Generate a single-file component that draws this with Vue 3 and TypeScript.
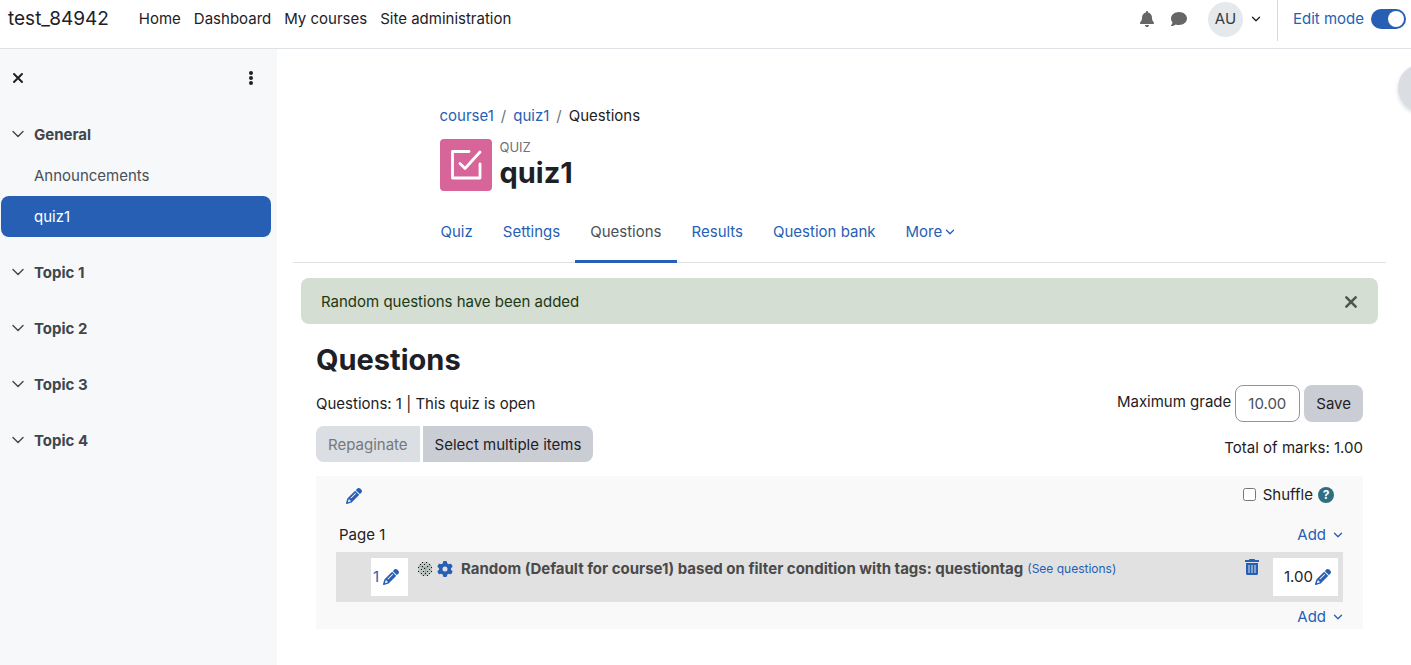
<script setup lang="ts">
import { ref } from 'vue'

const navItems: string[] = ['Home', 'Dashboard', 'My courses', 'Site administration']
const topics: string[] = ['Topic 1', 'Topic 2', 'Topic 3', 'Topic 4']
const tabs: string[] = ['Quiz', 'Settings', 'Questions', 'Results', 'Question bank']
const activeTab = ref('Questions')
const editMode = ref(true)
const shuffle = ref(false)
const maxGrade = ref('10.00')

const pencil =
  'M410.3 231l11.3-11.3-33.9-33.9-62.1-62.1L291.7 89.8l-11.3 11.3-22.6 22.6L58.6 322.9c-10.4 10.4-18 23.3-22.2 37.4L1 480.7c-2.5 8.4-.2 17.5 6.1 23.7s15.3 8.5 23.7 6.1l120.3-35.4c14.1-4.2 27-11.8 37.4-22.2L387.7 253.7 410.3 231zM160 399.4l-9.1 22.7c-4 3.1-8.5 5.4-13.3 6.9L59.4 452l23-78.1c1.4-4.9 3.8-9.4 6.9-13.3l22.7-9.1v32c0 8.8 7.2 16 16 16h32zM362.7 18.7L348.3 33.2 325.7 55.8 314.3 67.1l33.9 33.9 62.1 62.1 33.9 33.9 11.3-11.3 22.6-22.6 14.5-14.5c25-25 25-65.5 0-90.5L453.3 18.7c-25-25-65.5-25-90.5 0zm-47.4 168l-144 144c-6.2 6.2-16.4 6.2-22.6 0s-6.2-16.4 0-22.6l144-144c6.2-6.2 16.4-6.2 22.6 0s6.2 16.4 0 22.6z'
</script>

<template>
  <div class="page">
    <header class="topbar">
      <a class="brand" href="#">test_84942</a>
      <nav class="primary">
        <a v-for="item in navItems" :key="item" href="#">{{ item }}</a>
      </nav>
      <div class="tools">
        <button class="plain" type="button" aria-label="Notifications">
          <svg class="i16 grey" viewBox="0 0 448 512"><path d="M224 0c-17.7 0-32 14.3-32 32V51.2C119 66 64 130.6 64 208v18.8c0 47-17.3 92.4-48.5 127.6l-7.4 8.3c-8.4 9.4-10.4 22.9-5.3 34.4S19.4 416 32 416H416c12.6 0 24-7.4 29.2-18.9s3.1-25-5.3-34.4l-7.4-8.3C401.3 319.2 384 273.9 384 226.8V208c0-77.4-55-142-128-156.8V32c0-17.7-14.3-32-32-32zm45.3 493.3c12-12 18.7-28.3 18.7-45.3H160c0 17 6.7 33.3 18.7 45.3s28.3 18.7 45.3 18.7s33.3-6.7 45.3-18.7z" /></svg>
        </button>
        <button class="plain" type="button" aria-label="Messages">
          <svg class="i16 grey" viewBox="0 0 512 512"><path d="M512 240c0 114.9-114.6 208-256 208c-37.1 0-72.3-6.4-104.1-17.9c-11.9 8.7-31.3 20.6-54.3 30.6C73.6 471.1 44.7 480 16 480c-6.5 0-12.3-3.9-14.8-9.9c-2.5-6-1.1-12.8 3.4-17.4c.3-.3 .7-.7 1.3-1.4c1.1-1.2 2.8-3.1 4.9-5.7c4.1-5 9.6-12.4 15.2-21.6c10-16.6 19.5-38.4 21.4-62.9C17.7 326.8 0 285.1 0 240C0 125.1 114.6 32 256 32s256 93.1 256 208z" /></svg>
        </button>
        <button class="plain user" type="button" aria-label="User menu">
          <span class="avatar">AU</span>
          <svg class="chev" viewBox="0 0 10 10"><path d="M1.5 3.2 5 6.8 8.5 3.2" /></svg>
        </button>
        <label class="edit">
          Edit mode
          <input v-model="editMode" class="switch" type="checkbox" role="switch" />
        </label>
      </div>
    </header>

    <div class="body">
      <aside class="drawer">
        <div class="drawer-head">
          <button class="plain" type="button" aria-label="Close course index">
            <svg class="cross" viewBox="0 0 12 12"><path d="M2 2 10 10M10 2 2 10" /></svg>
          </button>
          <button class="plain" type="button" aria-label="Course index options">
            <svg class="kebab" viewBox="0 0 6 16"><circle cx="3" cy="3" r="2" /><circle cx="3" cy="8" r="2" /><circle cx="3" cy="13" r="2" /></svg>
          </button>
        </div>
        <nav class="index">
          <section>
            <a class="row title" href="#"><svg class="fold" viewBox="0 0 12 12"><path d="M1 2.600 6 7.600 11 2.600" /></svg>General</a>
            <a class="row" href="#">Announcements</a>
            <a class="row current" href="#">quiz1</a>
          </section>
          <section v-for="topic in topics" :key="topic">
            <a class="row title" href="#"><svg class="fold" viewBox="0 0 12 12"><path d="M1 2.600 6 7.600 11 2.600" /></svg>{{ topic }}</a>
          </section>
        </nav>
      </aside>

      <main class="main">
        <div class="intro">
          <nav class="crumbs" aria-label="Breadcrumb">
            <a href="#">course1</a><span class="sep">/</span><a href="#">quiz1</a><span class="sep">/</span><span>Questions</span>
          </nav>
          <div class="activity">
            <span class="activity-icon">
              <svg viewBox="0 0 32 32"><path d="M19 2.500H2.500v26.500h27.500V15M10 14.500l5 5L30 3" /></svg>
            </span>
            <div>
              <div class="kind">QUIZ</div>
              <h1>quiz1</h1>
            </div>
          </div>
        </div>

        <nav class="tabs">
          <div class="tabs-inner">
            <a v-for="tab in tabs" :key="tab" class="tab" :class="{ active: tab === activeTab }" href="#" @click.prevent="activeTab = tab">{{ tab }}</a>
            <a class="tab" href="#">More<svg class="chev more" viewBox="0 0 10 10"><path d="M1.5 3.2 5 6.8 8.5 3.2" /></svg></a>
          </div>
        </nav>

        <div class="alert" role="alert">
          <span>Random questions have been added</span>
          <button class="plain" type="button" aria-label="Dismiss">
            <svg class="dismiss" viewBox="0 0 12 12"><path d="M2 2 10 10M10 2 2 10" /></svg>
          </button>
        </div>

        <div class="content">
          <h2>Questions</h2>
          <div class="controls">
            <div>
              <p class="status">Questions: 1 | This quiz is open</p>
              <div class="group">
                <button class="btn first" type="button" disabled>Repaginate</button>
                <button class="btn last" type="button">Select multiple items</button>
              </div>
            </div>
            <div class="grading">
              <form class="grade" @submit.prevent>
                <label for="maxgrade">Maximum grade</label>
                <input id="maxgrade" v-model="maxGrade" type="text" />
                <button class="btn save" type="submit">Save</button>
              </form>
              <p class="total">Total of marks: 1.00</p>
            </div>
          </div>

          <section class="slots">
            <div class="slots-head">
              <button class="plain blue" type="button" aria-label="Edit heading"><svg class="i16" viewBox="0 0 512 512"><path :d="pencil" /></svg></button>
              <div class="shuffle">
                <input id="shuffle" v-model="shuffle" type="checkbox" />
                <label for="shuffle">Shuffle</label>
                <button class="help" type="button" aria-label="Help with Shuffle">?</button>
              </div>
            </div>
            <div class="page-row">
              <span>Page 1</span>
              <a class="add" href="#">Add<svg class="chev" viewBox="0 0 10 10"><path d="M1.5 3.2 5 6.8 8.5 3.2" /></svg></a>
            </div>
            <div class="slot">
              <a class="box number" href="#"><span>1</span><svg class="i16" viewBox="0 0 512 512"><path :d="pencil" /></svg></a>
              <div class="question">
                <svg class="die" viewBox="0 0 16 16">
                  <path class="ball" d="M5 1h6l4 4v6l-4 4H5l-4-4V5z" />
                  <path class="edge" d="M2 5l7 2 5-3M9 7l-1 7" />
                  <path class="pips" d="M5 1.500h1M9 1.500h1M3 3.500h1M7 3.500h1M12 3.500h1M1 6.500h1M5 5.500h1M10 5.500h1M14 6.500h1M4 8.500h1M7 7.500h1M12 8.500h1M1 10.500h1M6 10.500h1M10 10.500h1M14 10.500h1M4 12.500h1M8 12.500h1M12 12.500h1M6 14.500h1M10 14.500h1" />
                </svg>
                <svg class="i16 blue" viewBox="0 0 512 512"><path d="M495.9 166.6c3.2 8.7 .5 18.4-6.4 24.6l-43.3 39.4c1.1 8.3 1.7 16.8 1.7 25.4s-.6 17.1-1.7 25.4l43.3 39.4c6.9 6.2 9.6 15.9 6.4 24.6c-4.4 11.9-9.7 23.3-15.8 34.3l-4.7 8.1c-6.6 11-14 21.4-22.1 31.2c-5.9 7.2-15.7 9.6-24.5 6.8l-55.7-17.7c-13.4 10.3-28.2 18.9-44 25.4l-12.5 57.1c-2 9.1-9 16.3-18.2 17.8c-13.8 2.3-28 3.5-42.5 3.5s-28.7-1.2-42.5-3.5c-9.2-1.5-16.2-8.7-18.2-17.8l-12.5-57.1c-15.8-6.5-30.6-15.1-44-25.4L83.1 425.9c-8.8 2.8-18.6 .3-24.5-6.8c-8.1-9.8-15.5-20.2-22.1-31.2l-4.7-8.1c-6.1-11-11.4-22.4-15.8-34.3c-3.2-8.7-.5-18.4 6.4-24.6l43.3-39.4C64.6 273.1 64 264.6 64 256s.6-17.1 1.7-25.4L22.4 191.2c-6.9-6.2-9.6-15.9-6.4-24.6c4.4-11.9 9.7-23.3 15.8-34.3l4.7-8.1c6.6-11 14-21.4 22.1-31.2c5.9-7.2 15.7-9.6 24.5-6.8l55.7 17.7c13.4-10.3 28.2-18.9 44-25.4l12.5-57.1c2-9.1 9-16.3 18.2-17.8C227.3 1.2 241.5 0 256 0s28.7 1.2 42.5 3.5c9.2 1.5 16.2 8.7 18.2 17.8l12.5 57.1c15.8 6.5 30.6 15.1 44 25.4l55.7-17.7c8.8-2.8 18.6-.3 24.5 6.8c8.1 9.8 15.5 20.2 22.1 31.2l4.7 8.1c6.1 11 11.4 22.4 15.8 34.3zM256 336a80 80 0 1 0 0-160 80 80 0 1 0 0 160z" /></svg>
                <strong>Random (Default for course1) based on filter condition with tags: questiontag</strong>
                <a class="see" href="#">(See questions)</a>
              </div>
              <button class="plain blue trash" type="button" aria-label="Delete">
                <svg class="i16" viewBox="0 0 16 16"><path fill-rule="evenodd" d="M5.5 0h5l.6 1H15v2H1V1h3.900zM2 4h12v10.500a1.500 1.500 0 0 1-1.500 1.500h-9A1.500 1.500 0 0 1 2 14.500zM4.500 6v8h1V6zM7.500 6v8h1V6zM10.500 6v8h1V6z" /></svg>
              </button>
              <a class="box mark" href="#"><span>1.00</span><svg class="i16 blue" viewBox="0 0 512 512"><path :d="pencil" /></svg></a>
            </div>
            <div class="page-row end">
              <a class="add" href="#">Add<svg class="chev" viewBox="0 0 10 10"><path d="M1.5 3.2 5 6.8 8.5 3.2" /></svg></a>
            </div>
          </section>
        </div>
        <button class="drawer-toggle" type="button" aria-label="Open block drawer"></button>
      </main>
    </div>
  </div>
</template>

<style>
body {
  margin: 0;
  overflow: hidden;
}
</style>

<style scoped>
.page {
  display: flex;
  flex-direction: column;
  min-height: 100vh;
  font: 15px/22px Inter, "Liberation Sans", sans-serif;
  color: #1d2125;
  background: #fff;
}
*, *::before {
  box-sizing: border-box;
}
a {
  color: #265fb4;
  text-decoration: none;
}
h1, h2, p {
  margin: 0;
}
button, input {
  font: inherit;
  color: inherit;
}
.plain {
  display: flex;
  align-items: center;
  padding: 0;
  border: 0;
  background: none;
}
.blue {
  color: #265fb4;
}
svg {
  display: block;
  flex: none;
  fill: currentColor;
}
.i16 {
  width: 16px;
  height: 16px;
}
.grey {
  color: #666;
}
.chev {
  width: 10px;
  height: 10px;
  fill: none;
  stroke: currentColor;
  stroke-width: 1.3;
  stroke-linecap: round;
  stroke-linejoin: round;
}
.topbar {
  display: flex;
  align-items: center;
  height: 49px;
  padding: 0 5px 10px 8px;
  border-bottom: 1px solid #dee2e6;
}
.brand {
  font-size: 19px;
  color: #1d2125;
}
.primary {
  display: flex;
  gap: 13px;
  margin-left: 30px;
}
.primary a {
  color: #1d2125;
}
.tools {
  display: flex;
  align-items: center;
  gap: 16px;
  margin-left: auto;
}
.user {
  gap: 8px;
  margin-left: 5px;
}
.avatar {
  display: grid;
  place-items: center;
  width: 35px;
  height: 35px;
  border-radius: 50%;
  background: #e5e9ec;
  color: #343a40;
}
.edit {
  display: flex;
  align-items: center;
  gap: 7px;
  height: 44px;
  padding-left: 15px;
  border-left: 1px solid #d5d8dc;
  color: #265fb4;
}
.switch {
  appearance: none;
  width: 35px;
  height: 20px;
  margin: 0;
  padding: 2px;
  border-radius: 10px;
  background: #8f959e;
}
.switch::before {
  content: "";
  display: block;
  width: 16px;
  height: 16px;
  border-radius: 50%;
  background: #fff;
}
.switch:checked {
  background: #265fb4;
}
.switch:checked::before {
  margin-left: auto;
}
.body {
  display: flex;
  flex: 1;
}
.drawer {
  flex: none;
  width: 277px;
  background: #f7f8fa;
}
.drawer-head {
  display: flex;
  align-items: center;
  justify-content: space-between;
  height: 58px;
  padding: 0 23px 0 12px;
}
.cross, .dismiss, .fold {
  width: 12px;
  height: 12px;
  fill: none;
  stroke: currentColor;
  stroke-width: 2;
  stroke-linecap: round;
}
.kebab {
  width: 6px;
  height: 16px;
}
.fold {
  stroke-width: 1.4;
  stroke-linejoin: round;
}
.index {
  padding: 7px 6px 0 1px;
}
.index section {
  margin-bottom: 15px;
}
.row {
  display: flex;
  align-items: center;
  height: 41px;
  padding-left: 33px;
  border-radius: 8px;
  color: #495057;
}
.title {
  gap: 10px;
  padding-left: 11px;
  font-weight: 700;
  color: #40464c;
}
.current {
  background: #265fb4;
  color: #fff;
}
.main {
  position: relative;
  flex: 1;
  min-width: 0;
  padding: 56px 25px 0 16px;
  overflow: hidden;
}
.intro {
  max-width: 800px;
  margin: 0 auto;
}
.crumbs {
  display: flex;
  gap: 7px;
}
.sep {
  color: #6a737b;
}
.activity {
  display: flex;
  align-items: center;
  gap: 8px;
  margin-top: 12px;
}
.activity-icon {
  display: grid;
  place-items: center;
  width: 52px;
  height: 52px;
  border-radius: 4px;
  background: #d8659a;
}
.activity-icon svg {
  width: 32px;
  height: 32px;
  fill: none;
  stroke: #fff;
  stroke-width: 2.8;
  stroke-linejoin: round;
  stroke-linecap: round;
}
.kind {
  font-size: 13px;
  line-height: 16px;
  color: #6a737b;
}
h1, h2 {
  font-size: 29px;
  line-height: 36px;
  font-weight: 700;
}
.tabs {
  margin-top: 10px;
  border-bottom: 1px solid #dee2e6;
}
.tabs-inner {
  display: flex;
  max-width: 828px;
  margin: 0 auto;
}
.tab {
  display: flex;
  align-items: center;
  gap: 3px;
  height: 62px;
  margin-bottom: -1px;
  padding: 3px 15px 0;
  border-bottom: 3px solid transparent;
}
.tab.active {
  color: #495057;
  border-color: #265fb4;
}
.alert {
  display: flex;
  align-items: center;
  justify-content: space-between;
  height: 46px;
  margin: 15px 8px 0;
  padding: 2px 20px 0 20px;
  border-radius: 8px;
  background: #d4ded2;
  color: #1c3815;
}
.dismiss {
  width: 14px;
  height: 14px;
  color: #4d574b;
  stroke-width: 2.2;
}
.content {
  padding: 18px 23px 0;
}
.controls {
  display: flex;
  justify-content: space-between;
  margin-top: 7px;
}
.status {
  margin-top: 8px;
}
.group {
  display: flex;
  gap: 3px;
  margin-top: 11px;
}
.btn {
  height: 36px;
  padding: 1px 12px 0;
  border: 0;
  border-radius: 8px;
  background: #cacdd4;
}
.btn:disabled {
  background: #dbdee2;
  color: #75797d;
}
.first {
  border-radius: 8px 0 0 8px;
}
.last {
  border-radius: 0 8px 8px 0;
}
.grading {
  text-align: right;
}
.grade {
  display: flex;
  align-items: center;
  gap: 4px;
}
.grade label {
  padding-bottom: 4px;
}
.grade input {
  width: 65px;
  height: 37px;
  padding: 0 12px;
  border: 1px solid #8f959e;
  border-radius: 8px;
  background: #fff;
  color: #495057;
}
.save {
  height: 37px;
}
.total {
  margin-top: 15px;
}
.slots {
  margin-top: 14px;
  padding: 0 20px;
  background: #f9f9f9;
}
.slots-head {
  display: flex;
  align-items: center;
  justify-content: space-between;
  height: 40px;
  padding: 0 9px 0 10px;
}
.shuffle {
  display: flex;
  align-items: center;
  height: 22px;
  margin-bottom: 3px;
}
.shuffle input {
  width: 13px;
  height: 13px;
  margin: 0 7px 0 0;
}
.help {
  width: 16px;
  height: 16px;
  margin-left: 5px;
  padding: 0;
  border: 0;
  border-radius: 50%;
  background: #2d6f83;
  color: #fff;
  font-size: 12px;
  line-height: 16px;
  font-weight: 700;
}
.page-row {
  display: flex;
  align-items: center;
  justify-content: space-between;
  height: 36px;
  padding: 2px 0 0 3px;
}
.add {
  display: flex;
  align-items: center;
  gap: 7px;
}
.end {
  justify-content: flex-end;
  height: 27px;
}
.slot {
  display: flex;
  align-items: flex-start;
  height: 50px;
  padding: 6px 5px 6px 35px;
  background: #e1e1e1;
}
.box {
  display: flex;
  align-items: center;
  height: 38px;
  background: #fff;
}
.number {
  gap: 4px;
  width: 37px;
  padding-left: 2px;
}
.mark {
  gap: 2px;
  width: 65px;
  padding-left: 11px;
  color: #1d2125;
}
.question {
  display: flex;
  flex: 1;
  align-items: center;
  gap: 4px;
  min-width: 0;
  padding-left: 9px;
}
.question strong {
  margin-left: 4px;
  color: #4a4a4a;
}
.see {
  font-size: 12px;
}
.die {
  width: 16px;
  height: 16px;
}
.ball {
  fill: #bcc5c1;
}
.edge {
  fill: none;
  stroke: #8b9490;
  stroke-width: 0.8;
}
.pips {
  stroke: #111;
  stroke-width: 1;
}
.trash {
  margin: 1px 13px 0 0;
}
.drawer-toggle {
  position: absolute;
  top: 15px;
  right: -35px;
  width: 48px;
  height: 48px;
  border: 0;
  border-radius: 50%;
  background: #dadde2;
  box-shadow: 0 2px 4px rgba(0, 0, 0, 0.15);
}
</style>
